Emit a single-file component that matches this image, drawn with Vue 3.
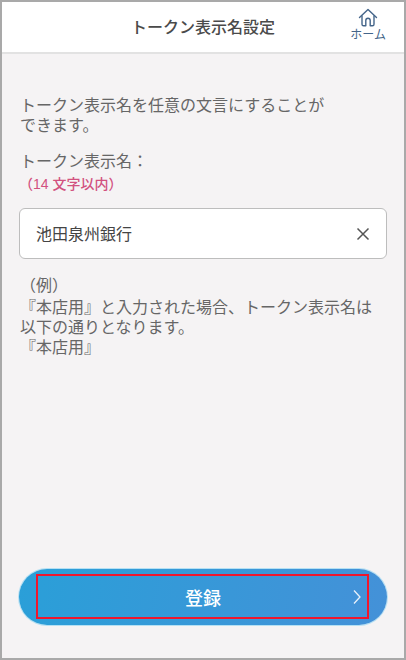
<template>
  <div class="screen">
    <!-- ヘッダー -->
    <header class="header">
      <span class="title">トークン表示名設定</span>
      <div class="home">
        <svg class="home-icon" viewBox="0 0 20 20" width="20" height="20" fill="none" stroke="#44658a" stroke-width="1.4" stroke-linejoin="round" stroke-linecap="round">
          <path d="M1.5 9.5 10 1.5l8.5 8" />
          <path d="M4 8v8.2c0 1 .6 1.6 1.6 1.6h2.2v-5.3c0-1.2 1-2.2 2.2-2.2s2.2 1 2.2 2.2v5.3h2.2c1 0 1.6-.6 1.6-1.6V8" />
        </svg>
        <span class="home-label">ホーム</span>
      </div>
    </header>

    <main class="content">
      <p class="lead">トークン表示名を任意の文言にすることが<br />できます。</p>
      <p class="label">トークン表示名：</p>
      <p class="limit">（14 文字以内）</p>

      <div class="field">
        <span class="field-value">池田泉州銀行</span>
        <svg viewBox="0 0 14 14" width="14" height="14" fill="none" stroke="#555" stroke-width="1.5">
          <path d="M1.5 1.5l11 11M12.5 1.5l-11 11" />
        </svg>
      </div>

      <p class="example-head">（例）</p>
      <p class="example">
        『本店用』と入力された場合、トークン表示名は<br />
        以下の通りとなります。<br />
        『本店用』
      </p>

      <button class="submit">
        <span>登録</span>
        <svg class="chevron" viewBox="0 0 8 16" width="8" height="16" fill="none" stroke="#e8f1fa" stroke-width="1.3">
          <path d="M1 1.5 7 8l-6 6.5" />
        </svg>
        <!-- 赤枠の注記 -->
        <i class="highlight"></i>
      </button>
    </main>
  </div>
</template>

<script setup>
</script>

<style>
body {
  margin: 0;
}
</style>

<style scoped>
.screen {
  width: 406px;
  height: 660px;
  box-sizing: border-box;
  border: 2px solid #a9a9a9;
  background: #f5f3f4;
  display: flex;
  flex-direction: column;
  font-family: "Liberation Sans", "Noto Sans CJK JP", sans-serif;
  color: #666;
}

.header {
  height: 50px;
  flex-shrink: 0;
  background: #fff;
  border-bottom: 2px solid #e2e2e2;
  display: flex;
  align-items: center;
  justify-content: center;
  position: relative;
}

.title {
  font-size: 16px;
  font-weight: 500;
  color: #4a4a4a;
  margin-top: -2px;
}

.home {
  position: absolute;
  right: 18px;
  top: 6px;
  display: flex;
  flex-direction: column;
  align-items: center;
}

.home-icon {
  display: block;
}

.home-label {
  font-size: 12px;
  line-height: 15px;
  color: #44658a;
}

.content {
  flex: 1;
  padding: 42px 17px 33px;
  display: flex;
  flex-direction: column;
}

p {
  margin: 0;
}

.lead {
  font-size: 16px;
  line-height: 20px;
  padding-left: 1px;
}

.label {
  font-size: 16px;
  line-height: 20px;
  margin-top: 16px;
  padding-left: 1px;
}

.limit {
  font-size: 14px;
  font-weight: 500;
  line-height: 20px;
  color: #d2517f;
  margin-top: 2px;
}

.field {
  height: 51px;
  margin-top: 14px;
  flex-shrink: 0;
  box-sizing: border-box;
  background: #fff;
  border: 1.5px solid #bdbdbd;
  border-radius: 6px;
  display: flex;
  align-items: center;
  justify-content: space-between;
  padding: 0 16px;
}

.field-value {
  font-size: 16px;
  color: #444;
  margin-top: -2px;
}

.example-head {
  font-size: 16px;
  line-height: 20px;
  margin-top: 17px;
  padding-left: 1px;
}

.example {
  font-size: 16px;
  line-height: 20px;
  margin-top: 2px;
  padding-left: 1px;
}

.submit {
  margin-top: auto;
  height: 56px;
  flex-shrink: 0;
  border: none;
  border-radius: 28px;
  background: linear-gradient(100deg, #2a9fd8, #4491d8);
  box-shadow: 0 0 0 1px #b5e0f3;
  color: #fff;
  font-family: inherit;
  font-size: 18px;
  font-weight: 500;
  display: flex;
  align-items: center;
  justify-content: center;
  position: relative;
}

.chevron {
  position: absolute;
  right: 26px;
  top: 20px;
}

.highlight {
  position: absolute;
  left: 17px;
  right: 18px;
  top: 5px;
  bottom: 6px;
  border: 2.5px solid #f0162c;
}
</style>
